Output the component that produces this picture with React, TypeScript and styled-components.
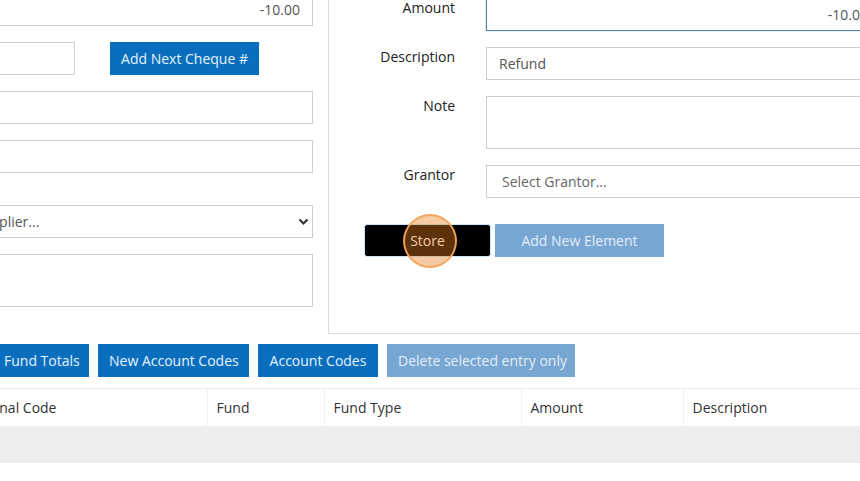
import React from 'react';
import styled, { createGlobalStyle } from 'styled-components';

const GlobalStyle = createGlobalStyle`
  html, body {
    margin: 0;
    padding: 0;
    background: #ffffff;
    overflow: hidden;
  }
  body {
    font-family: 'Open Sans', 'Liberation Sans', sans-serif;
    font-size: 14px;
    color: #333;
  }
  * {
    box-sizing: border-box;
  }
`;

const Viewport = styled.div`
  width: 860px;
  height: 481px;
  overflow: hidden;
`;

const Canvas = styled.div`
  margin: -7px 0 0 -220px;
  width: 1200px;
`;

const TopSection = styled.div`
  display: flex;
  align-items: flex-start;
  gap: 15px;
`;

const LeftColumn = styled.div`
  width: 533px;
  display: flex;
  flex-direction: column;
`;

const FieldRow = styled.div<{ $gap?: number }>`
  display: grid;
  grid-template-columns: 129px 1fr;
  column-gap: 10px;
  margin-top: ${props => props.$gap ?? 16}px;

  &:first-child {
    margin-top: 0;
  }
`;

const FieldLabel = styled.label`
  text-align: right;
  line-height: 20px;
  padding-top: 6px;
  color: #333;
`;

const Input = styled.input<{ $align?: string; $focused?: boolean; $width?: number; $indent?: number }>`
  height: 33px;
  width: ${props => (props.$width ? `${props.$width}px` : '100%')};
  padding: 0 12px 0 ${props => props.$indent ?? 12}px;
  border: 1px solid ${props => (props.$focused ? '#5b7b97' : '#cfcfcf')};
  box-shadow: ${props => (props.$focused ? '0 0 0 1px rgba(102, 175, 233, 0.18)' : 'none')};
  background: #fff;
  font-family: inherit;
  font-size: 14px;
  color: #555;
  text-align: ${props => props.$align || 'left'};
  outline: none;

  &::placeholder {
    color: #666;
  }
`;

const TextArea = styled.textarea`
  height: 53px;
  width: 100%;
  border: 1px solid #cfcfcf;
  resize: none;
  font-family: inherit;
  font-size: 14px;
  outline: none;
`;

const SelectWrap = styled.div`
  position: relative;
`;

const Select = styled.select`
  appearance: none;
  width: 100%;
  height: 33px;
  padding: 0 12px;
  border: 1px solid #cfcfcf;
  background: #fff;
  font-family: inherit;
  font-size: 14px;
  color: #555;
  outline: none;
`;

const Chevron = styled.svg`
  position: absolute;
  right: 4px;
  top: 13px;
  pointer-events: none;
`;

const InlineGroup = styled.div`
  display: flex;
  align-items: center;
  gap: 35px;
`;

const Button = styled.button<{ $variant?: 'primary' | 'disabled' | 'dark'; $width?: number }>`
  position: relative;
  height: 33px;
  width: ${props => (props.$width ? `${props.$width}px` : 'auto')};
  padding: 0 10px;
  border: 1px solid transparent;
  border-radius: 0;
  font-family: inherit;
  font-size: 14px;
  white-space: nowrap;
  cursor: pointer;
  background: ${props =>
    props.$variant === 'disabled' ? '#78a6d2' : props.$variant === 'dark' ? '#000' : '#0a6ebf'};
  color: ${props => (props.$variant === 'disabled' ? '#e2eef9' : props.$variant === 'dark' ? '#fff' : '#e6f3ff')};
  ${props =>
    props.$variant === 'dark' &&
    `
    height: 31px;
    margin-top: 1px;
    border-color: #000;
    border-radius: 2px;
    box-shadow: 0 0 0 1px #c9e6f7;
  `}
`;

const ClickRing = styled.span`
  position: absolute;
  left: 50%;
  top: 50%;
  width: 54px;
  height: 54px;
  margin: -27px 0 0 -25px;
  border-radius: 50%;
  background: rgba(232, 122, 30, 0.4);
  border: 2px solid rgba(243, 164, 92, 0.95);
  pointer-events: none;
`;

const Panel = styled.div`
  width: 570px;
  border: 1px solid #dcdcdc;
  border-right: none;
  padding: 4px 17px 76px 0;
`;

const PanelRow = styled.div`
  display: grid;
  grid-template-columns: 126px 1fr;
  column-gap: 31px;
  align-items: start;
  margin-top: 16px;

  &:first-child {
    margin-top: 0;
  }
`;

const PanelLabel = styled.label`
  text-align: right;
  line-height: 20px;
  color: #222;
`;

const PanelActions = styled.div`
  display: flex;
  gap: 5px;
  margin: 26px 0 0 36px;
`;

const ActionBar = styled.div`
  display: flex;
  gap: 9px;
  margin-top: 10px;
  padding-left: 213px;
`;

const Table = styled.table`
  margin: 11px 0 0 179px;
  border-collapse: collapse;
  table-layout: fixed;
  width: 1024px;
`;

const HeaderCell = styled.th<{ $width: number }>`
  width: ${props => props.$width}px;
  height: 37px;
  padding: 0 9px;
  text-align: left;
  font-weight: 400;
  color: #333;
  border-top: 1px solid #eeeeee;
  border-left: 1px solid #f1f1f1;

  &:first-child {
    border-left: none;
  }
`;

const EmptyRow = styled.tr`
  background: #eeeded;
  height: 37px;
`;

const columns = [
  { name: 'Original Code', width: 248 },
  { name: 'Fund', width: 117 },
  { name: 'Fund Type', width: 197 },
  { name: 'Amount', width: 162 },
  { name: 'Description', width: 300 },
];

const actions = [
  { label: 'Fund Totals', width: 96 },
  { label: 'New Account Codes', width: 151 },
  { label: 'Account Codes', width: 120 },
  { label: 'Delete selected entry only', width: 188, disabled: true },
];

const App: React.FC = () => {
  return (
    <Viewport>
      <GlobalStyle />
      <Canvas>
        <TopSection>
          <LeftColumn>
            <FieldRow>
              <FieldLabel>Amount</FieldLabel>
              <Input $align="right" defaultValue="-10.00" />
            </FieldRow>
            <FieldRow>
              <FieldLabel>Cheque #</FieldLabel>
              <InlineGroup>
                <Input $width={156} />
                <Button $width={149}>Add Next Cheque #</Button>
              </InlineGroup>
            </FieldRow>
            <FieldRow>
              <FieldLabel>Payee</FieldLabel>
              <Input />
            </FieldRow>
            <FieldRow>
              <FieldLabel>Reference</FieldLabel>
              <Input />
            </FieldRow>
            <FieldRow $gap={32}>
              <FieldLabel>Supplier</FieldLabel>
              <SelectWrap>
                <Select defaultValue="">
                  <option value="">Select Supplier...</option>
                </Select>
                <Chevron width="11" height="8" viewBox="0 0 11 8">
                  <path d="M1.5 1.5l4 4 4-4" fill="none" stroke="#333" strokeWidth="2.2" />
                </Chevron>
              </SelectWrap>
            </FieldRow>
            <FieldRow>
              <FieldLabel>Memo</FieldLabel>
              <TextArea />
            </FieldRow>
          </LeftColumn>

          <Panel>
            <PanelRow>
              <PanelLabel>Amount</PanelLabel>
              <Input $align="right" $focused defaultValue="-10.00" />
            </PanelRow>
            <PanelRow>
              <PanelLabel>Description</PanelLabel>
              <Input defaultValue="Refund" />
            </PanelRow>
            <PanelRow>
              <PanelLabel>Note</PanelLabel>
              <TextArea />
            </PanelRow>
            <PanelRow>
              <PanelLabel>Grantor</PanelLabel>
              <Input placeholder="Select Grantor..." $indent={15} />
            </PanelRow>
            <PanelActions>
              <Button $variant="dark" $width={125}>
                Store
                <ClickRing />
              </Button>
              <Button $variant="disabled" $width={169}>Add New Element</Button>
            </PanelActions>
          </Panel>
        </TopSection>

        <ActionBar>
          {actions.map(action => (
            <Button
              key={action.label}
              $width={action.width}
              $variant={action.disabled ? 'disabled' : 'primary'}
            >
              {action.label}
            </Button>
          ))}
        </ActionBar>

        <Table>
          <thead>
            <tr>
              {columns.map(col => (
                <HeaderCell key={col.name} $width={col.width}>
                  {col.name}
                </HeaderCell>
              ))}
            </tr>
          </thead>
          <tbody>
            <EmptyRow>
              <td colSpan={columns.length} />
            </EmptyRow>
          </tbody>
        </Table>
      </Canvas>
    </Viewport>
  );
};

export default App;
